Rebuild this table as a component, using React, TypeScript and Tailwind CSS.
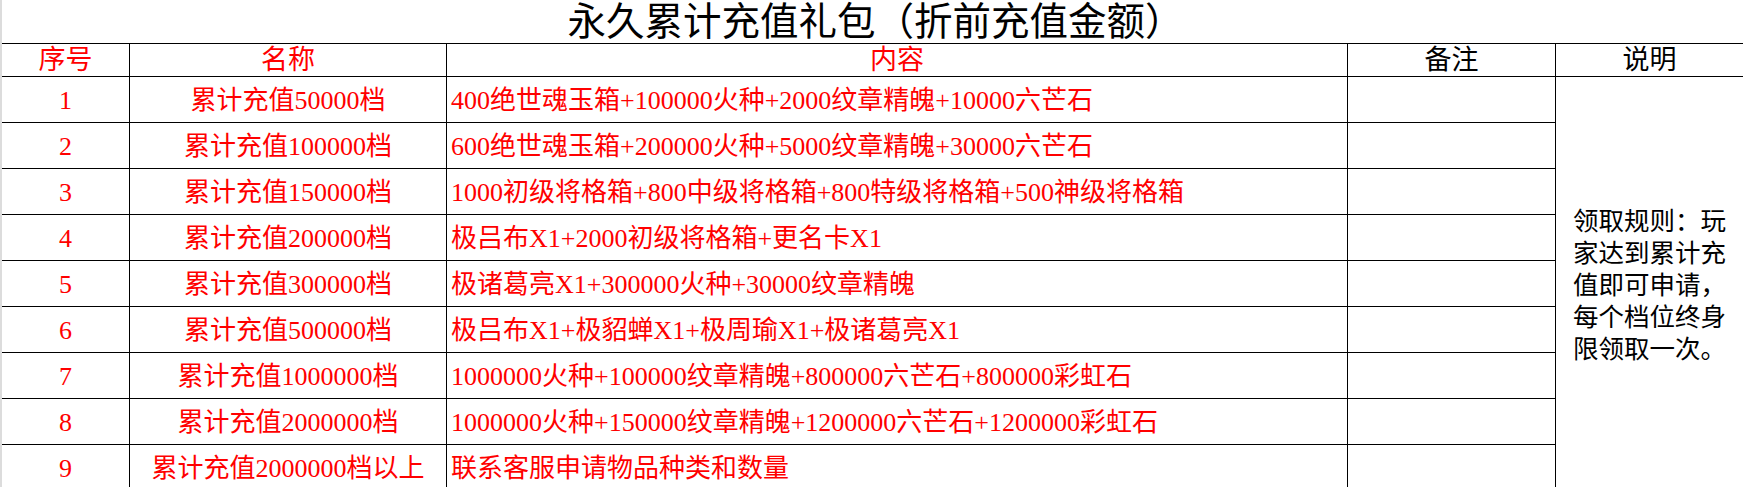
const rows = [
  { name: "累计充值50000档", content: "400绝世魂玉箱+100000火种+2000纹章精魄+10000六芒石" },
  { name: "累计充值100000档", content: "600绝世魂玉箱+200000火种+5000纹章精魄+30000六芒石" },
  { name: "累计充值150000档", content: "1000初级将格箱+800中级将格箱+800特级将格箱+500神级将格箱" },
  { name: "累计充值200000档", content: "极吕布X1+2000初级将格箱+更名卡X1" },
  { name: "累计充值300000档", content: "极诸葛亮X1+300000火种+30000纹章精魄" },
  { name: "累计充值500000档", content: "极吕布X1+极貂蝉X1+极周瑜X1+极诸葛亮X1" },
  { name: "累计充值1000000档", content: "1000000火种+100000纹章精魄+800000六芒石+800000彩虹石" },
  { name: "累计充值2000000档", content: "1000000火种+150000纹章精魄+1200000六芒石+1200000彩虹石" },
  { name: "累计充值2000000档以上", content: "联系客服申请物品种类和数量" },
]

const noteLines = ["领取规则：玩", "家达到累计充", "值即可申请，", "每个档位终身", "限领取一次。"]

const font = { fontFamily: '"Liberation Serif", "Noto Sans CJK SC", serif' }

export default function App() {
  return (
    <div className="h-[487px] w-[1743px] overflow-hidden bg-white border-l-2 border-[#dcdcdc]" style={font}>
      {/* title row */}
      <div className="h-[44px] border-b border-black flex items-end justify-center pl-[6px] pb-[2px]">
        <span className="text-[38.5px] leading-none text-black">永久累计充值礼包（折前充值金额）</span>
      </div>

      <div className="grid grid-cols-[128px_317px_901px_208px_187px] grid-rows-[33px_repeat(9,46px)]">
        {/* header */}
        <div className="border-r border-b border-black flex items-center justify-center text-[27px] leading-none text-[#ff0000]">序号</div>
        <div className="border-r border-b border-black flex items-center justify-center text-[27px] leading-none text-[#ff0000]">名称</div>
        <div className="border-r border-b border-black flex items-center justify-center text-[27px] leading-none text-[#ff0000]">内容</div>
        <div className="border-r border-b border-black flex items-center justify-center text-[27px] leading-none text-black">备注</div>
        <div className="border-b border-black flex items-center justify-center text-[27px] leading-none text-black">说明</div>

        {rows.map((r, i) => (
          <div key={i} className="contents">
            <div
              className="border-r border-b border-black flex items-center justify-center text-[26px] leading-none text-[#ff0000] pt-[2px]"
              style={{ gridRow: i + 2, gridColumn: 1 }}
            >
              {i + 1}
            </div>
            <div
              className="border-r border-b border-black flex items-center justify-center text-[26px] leading-none text-[#ff0000] whitespace-nowrap pt-[2px]"
              style={{ gridRow: i + 2, gridColumn: 2 }}
            >
              {r.name}
            </div>
            <div
              className="border-r border-b border-black flex items-center pl-[4px] text-[26px] leading-none text-[#ff0000] whitespace-nowrap pt-[2px]"
              style={{ gridRow: i + 2, gridColumn: 3 }}
            >
              {r.content}
            </div>
            <div className="border-r border-b border-black" style={{ gridRow: i + 2, gridColumn: 4 }} />
          </div>
        ))}

        {/* merged note cell */}
        <div className="col-start-5 row-start-2 row-span-9 flex flex-col justify-center pl-[17px] pt-[4px] text-[25.5px] leading-[32px] text-black">
          {noteLines.map((l) => (
            <div key={l} className="whitespace-nowrap">{l}</div>
          ))}
        </div>
      </div>
    </div>
  )
}
